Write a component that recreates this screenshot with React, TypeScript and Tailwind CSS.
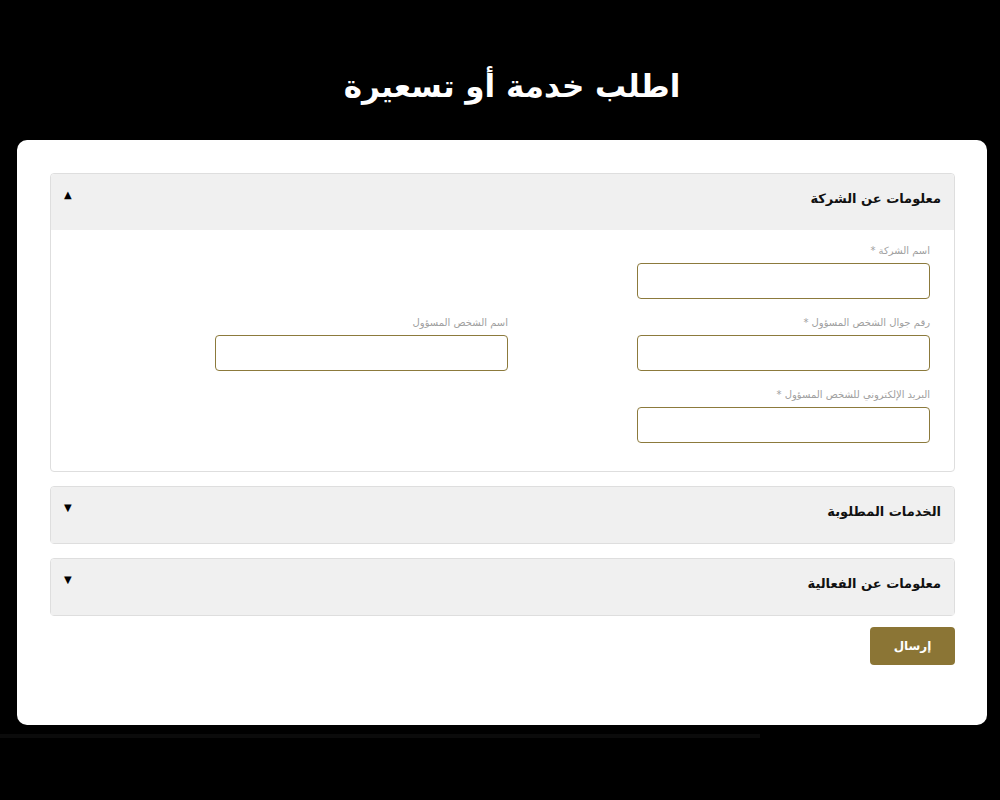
import { useState } from 'react';

const font = { fontFamily: '"DejaVu Sans", "Noto Sans", sans-serif' };

function Field({ label, required }: { label: string; required?: boolean }) {
  return (
    <div className="flex flex-col">
      <label className="mb-[5px] h-[14px] text-[10px] leading-[14px] text-[#a0a0a0]">
        {label}
        {required && ' *'}
      </label>
      <input
        type="text"
        className="h-[36px] w-[293px] rounded-[4px] border border-[#8c7a3c] bg-white px-3 text-sm outline-none"
      />
    </div>
  );
}

function Section({
  title,
  open,
  onToggle,
  children,
}: {
  title: string;
  open: boolean;
  onToggle: () => void;
  children?: React.ReactNode;
}) {
  return (
    <div className="rounded-[4px] border border-[#dedede] bg-white">
      <button
        type="button"
        onClick={onToggle}
        className="flex h-[56px] w-full items-start justify-between rounded-t-[4px] bg-[#f0f0f0] pr-[13px] pl-[13px] pt-[14px]"
      >
        <span className="text-[13px] font-bold leading-[22px] text-[#111]">{title}</span>
        <span className="text-[10px] leading-[14px] text-black">{open ? '▲' : '▼'}</span>
      </button>
      {open && children}
    </div>
  );
}

export default function App() {
  const [open, setOpen] = useState<number>(0);
  const toggle = (i: number) => setOpen(open === i ? -1 : i);

  return (
    <div dir="rtl" style={font} className="min-h-[800px] bg-black">
      <h1 className="pt-[64px] pb-[32px] pl-[24px] text-center text-[31px] font-bold leading-[44px] text-white">
        اطلب خدمة أو تسعيرة
      </h1>

      <div className="mr-[13px] ml-[17px] rounded-[10px] bg-white pr-[32px] pl-[33px] pt-[33px] pb-[60px]">
        <div className="flex flex-col gap-[14px]">
          <Section title="معلومات عن الشركة" open={open === 0} onToggle={() => toggle(0)}>
            <div className="grid grid-cols-[293px_293px] gap-x-[129px] gap-y-[17px] pr-[24px] pt-[14px] pb-[28px]">
              <Field label="اسم الشركة" required />
              <div />
              <Field label="رقم جوال الشخص المسؤول" required />
              <Field label="اسم الشخص المسؤول" />
              <Field label="البريد الإلكتروني للشخص المسؤول" required />
            </div>
          </Section>
          <Section title="الخدمات المطلوبة" open={open === 1} onToggle={() => toggle(1)} />
          <Section title="معلومات عن الفعالية" open={open === 2} onToggle={() => toggle(2)} />
        </div>

        <div className="mt-[11px] flex">
          <button
            type="button"
            className="h-[38px] w-[85px] rounded-[4px] bg-[#8b7535] text-[12px] font-bold text-white"
          >
            إرسال
          </button>
        </div>
      </div>
      <div dir="ltr" className="mt-[9px] flex">
        <div className="h-[4px] w-[760px] bg-[#0b0b0b]" />
      </div>
    </div>
  );
}
